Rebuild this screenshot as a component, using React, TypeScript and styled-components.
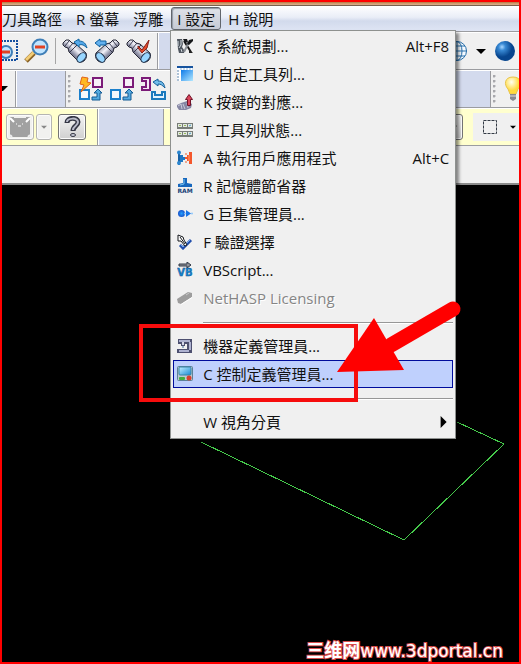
import React from "react";
import styled, { createGlobalStyle, css } from "styled-components";

const line = "#9b9ca0";
const face = "#f0f0f0";
const blueFill = "#d3daed";
const paleYellow = "#ffffce";

const GlobalStyle = createGlobalStyle`
  * { box-sizing: border-box; }
  body { margin: 0; background: #000; }
  button { font: inherit; color: inherit; }
`;

const Window = styled.div`
  position: relative;
  display: flex;
  flex-direction: column;
  min-height: 100vh;
  overflow: hidden;
  border: 2px solid #f00;
  background: #000;
  color: #111;
  font: 15px/20px "Open Sans", "Noto Sans CJK TC", sans-serif;
`;

const TitleEdge = styled.div`
  height: 4px;
  background: linear-gradient(#b5763f, #e0b088 60%, #4c3c34);
`;

const MenuBar = styled.nav`
  display: flex;
  align-items: flex-start;
  height: 26px;
  padding-top: 1px;
  border-bottom: 1px solid ${line};
  background: linear-gradient(#fff, #e9edf7 45%, #d2daec 60%, #dfe5f4);
`;

const MenuItem = styled.button<{ $open?: boolean }>`
  height: 23px;
  margin: 0;
  padding: 0 6px;
  border: 1px solid transparent;
  border-radius: 3px;
  background: none;
  line-height: 20px;
  white-space: nowrap;
  &:first-child { padding-left: 0; margin-left: -1px; }
  ${(p) =>
    p.$open &&
    css`
      && { padding: 0 5px; margin: 0 0 0 1px; }
      border-color: #62666d;
      background: linear-gradient(#dfe2e8, #c6cbd6);
      box-shadow: inset 1px 1px 1px #9299a6;
    `}
`;

const MenuAnchor = styled.div`
  position: relative;
  height: 23px;
`;

const Popup = styled.div`
  position: absolute;
  z-index: 2;
  top: 100%;
  left: 0;
  width: 286px;
  padding: 1px 2px 2px;
  border: 1px solid #8e918f;
  background: ${face};
  box-shadow: 3px 3px 3px rgba(0, 0, 0, 0.45);
`;

const PopupItem = styled.button<{ $active?: boolean }>`
  display: flex;
  align-items: center;
  width: 100%;
  height: 28px;
  padding: 0 3px;
  border: 1px solid ${(p) => (p.$active ? "#000c9c" : "transparent")};
  background: ${(p) => (p.$active ? "#bfd0fd" : "none")};
  line-height: 20px;
  text-align: left;
  &:disabled { color: #858585; text-shadow: 1px 1px #fff; }
`;

const IconCell = styled.span`
  display: flex;
  flex: 0 0 26px;
`;

const ItemText = styled.span`
  flex: 1;
  white-space: nowrap;
`;

const Shortcut = styled.span`
  white-space: nowrap;
`;

const Separator = styled.hr`
  height: 2px;
  margin: 10px 0 8px 30px;
  border: 0;
  border-top: 1px solid #979797;
  background: #fff;
`;

const ToolRow = styled.div<{ $yellow?: boolean }>`
  display: flex;
  height: 38px;
  border-top: 1px solid #fff;
  border-bottom: 1px solid ${line};
  background: ${(p) => (p.$yellow ? paleYellow : blueFill)};
`;

const Band = styled.div<{ $w: number; $gap?: number; $pad?: number; $yellow?: boolean }>`
  display: flex;
  flex: 0 0 ${(p) => p.$w}px;
  width: ${(p) => p.$w}px;
  align-items: center;
  gap: ${(p) => p.$gap ?? 0}px;
  padding-left: ${(p) => p.$pad ?? 0}px;
  overflow: hidden;
  border-right: 1px solid ${line};
  background: ${(p) => (p.$yellow ? paleYellow : face)};
  &:last-child { border-right: 0; }
`;

const Gap = styled.div<{ $w?: number }>`
  flex: ${(p) => (p.$w ? `0 0 ${p.$w}px` : "1")};
  border-right: 1px solid ${line};
  border-left: 1px solid #fff;
  background: ${blueFill};
`;

const Grip = styled.div`
  flex: 0 0 3px;
  height: 28px;
  margin-right: 2px;
  background: radial-gradient(circle at 1px 1px, #a8a8ac 1px, transparent 2px) 0 0 / 3px 5px;
`;

const Rule = styled.div`
  flex: 0 0 1px;
  height: 26px;
  background: #a5a5a5;
`;

const ToolButton = styled.button`
  display: flex;
  flex: none;
  align-items: center;
  justify-content: center;
  padding: 0;
  border: 0;
  background: none;
`;

const ButtonPair = styled.div`
  display: flex;
  gap: 2px;
`;

const BoxButton = styled.button<{ $w: number; $strong?: boolean }>`
  display: flex;
  flex: 0 0 ${(p) => p.$w}px;
  align-items: center;
  justify-content: center;
  height: 26px;
  padding: 0;
  border: 1px solid ${(p) => (p.$strong ? "#747474" : "#b5b5b2")};
  border-radius: 3px;
  background: ${(p) => (p.$strong ? "linear-gradient(#f4f4f4, #d0d0d0)" : "#f1f1ef")};
  box-shadow: inset 0 0 0 1px #fbfbfb;
`;

const SelectBand = styled.div`
  display: flex;
  flex: 1;
  align-items: center;
  gap: 13px;
  height: 28px;
  margin-left: 10px;
  padding-left: 10px;
  background: ${face};
`;

const Status = styled.div`
  height: 39px;
  border-bottom: 2px solid #8b8b8b;
  background: ${face};
`;

const Canvas = styled.main`
  flex: 1;
  background: #000;
`;

const Drawing = styled.svg`
  display: block;
`;

const Mark = styled.div`
  position: absolute;
  z-index: 3;
  top: 322px;
  left: 137px;
  width: 219px;
  height: 78px;
  border: 4px solid #f60c0c;
  pointer-events: none;
`;

const Arrow = styled.svg`
  position: absolute;
  z-index: 4;
  top: 296px;
  left: 333px;
  pointer-events: none;
`;

const Watermark = styled.div`
  position: absolute;
  right: 16px;
  bottom: 0;
  color: #fff;
  font: 700 18px/22px "Noto Sans CJK SC", sans-serif;
  white-space: nowrap;
  -webkit-text-stroke: 2px #d84b4b;
  paint-order: stroke fill;
`;

const Site = styled.span`
  font: 17px/22px "DejaVu Sans", sans-serif;
`;

const Svg16 = ({ children }: { children: React.ReactNode }) => (
  <svg width="16" height="16" viewBox="0 0 16 16" aria-hidden="true">{children}</svg>
);

const SystemIcon = () => (
  <Svg16>
    <path d="M0 1h5l1 5-1 3 2 3v3H2l-1-4z" fill="#4f565f" />
    <path d="M1 3v5M4 2v5l-2 3M4 11l1 3" stroke="#d3dadf" fill="none" />
    <path d="M7 3l7 11" stroke="#111" strokeWidth="2" />
    <path d="M12 4l-5 10" stroke="#8b8f94" strokeWidth="2" />
    <path d="M6 1h4l1 3-3 1zM16 1l-4 1-2 4 2 1 4-4z" fill="#15171a" />
    <path d="M12 11l4 4h-4z" fill="#222" />
  </Svg16>
);

const WindowIcon = () => (
  <Svg16>
    <defs><linearGradient id="sky" x2="1" y2="1"><stop stopColor="#0e7be9" /><stop offset="1" stopColor="#b3e8ff" /></linearGradient></defs>
    <path d="M0 0h16v15H0z" fill="#fff" />
    <path d="M4 4h12v11H4z" fill="url(#sky)" />
    <path d="M0 0h16v2H0z" fill="#16539e" />
    <path d="M1 4v11" stroke="#5e87ae" strokeDasharray="2 1" />
    <path d="M3 3h13" stroke="#8fb8e0" strokeDasharray="2 1" />
  </Svg16>
);

const KeyIcon = () => (
  <Svg16>
    <path d="M0 11l4-2 6-2 5 3-1 4-5 2H2l-2-3z" fill="#8587a4" />
    <path d="M1 12l3-2 1 5M6 10l2 5M10 9l1 5" stroke="#c9cada" fill="none" />
    <path d="M12 .5l3.5 5h-2v6h-3v-6h-2z" fill="#da4359" stroke="#701329" />
  </Svg16>
);

const GridIcon = () => (
  <Svg16>
    <path d="M0 1h16v6H0zM0 9h16v6H0z" fill="#777d78" />
    <path d="M1 2h4v3H1zM6 2h4v3H6zM11 2h4v3h-4zM1 10h4v3H1zM6 10h4v3H6zM11 10h4v3h-4z" fill="#e2e8e1" />
    <path d="M2 3.5h2M7 3.5h2M2 11.5h2M7 11.5h2" stroke="#94b85b" />
    <path d="M12 4l2-1M12 12l2-1" stroke="#439ac9" />
  </Svg16>
);

const LinkIcon = () => (
  <Svg16>
    <path d="M2 1v14" stroke="#1761a5" strokeWidth="2" />
    <circle cx="2" cy="2.500" r="2" fill="#2b86cf" />
    <circle cx="2" cy="13" r="2" fill="#2b86cf" />
    <path d="M3 5h3v2h2v3H6v2H3z" fill="#1f78c4" />
    <path d="M15 2v12h-3v-3h-2v-2H8V7h2V5h2V2z" fill="#f4572c" />
    <path d="M12 5v6" stroke="#ffa06c" />
    <circle cx="9" cy="4" r="1" fill="#f0906c" /><circle cx="9" cy="12" r="1" fill="#f0906c" />
  </Svg16>
);

const RamIcon = () => (
  <Svg16>
    <path d="M6 0h4v5l5 1v3H1V6l5-1z" fill="#1667bd" />
    <path d="M7 1v5l-4 1" stroke="#78c5f1" fill="none" />
    <text x="8" y="15" textAnchor="middle" fontSize="6" fontWeight="bold" fontFamily="DejaVu Sans" fill="#163f76">RAM</text>
  </Svg16>
);

const MacroIcon = () => (
  <Svg16>
    <defs><radialGradient id="dot"><stop stopColor="#269fff" /><stop offset="1" stopColor="#1653ca" /></radialGradient></defs>
    <circle cx="4.500" cy="7.500" r="3.500" fill="url(#dot)" />
    <path d="M9 4l5 3.500L9 11z" fill="#1773e6" />
    <circle cx="8" cy="7.500" r="1" fill="#91c8fa" /><circle cx="15" cy="7.500" r="1" fill="#91c8fa" />
  </Svg16>
);

const VerifyIcon = () => (
  <Svg16>
    <path d="M3 11l3 3 8-8" fill="none" stroke="#214eac" strokeWidth="3" />
    <path d="M4 11l2 2 7-7" fill="none" stroke="#72a8f0" />
    <path d="M1 1l5 2 1 3 3 5-2 1-4-5-3 0z" fill="#fff" stroke="#15181d" />
    <path d="M3 3l5 7" stroke="#15181d" />
  </Svg16>
);

const ScriptIcon = () => (
  <Svg16>
    <path d="M2 2h8V0l4 3-4 3V4H2z" fill="#929399" stroke="#313946" />
    <text x="8" y="14" textAnchor="middle" fontSize="10" fontWeight="bold" fontFamily="DejaVu Sans" fill="#1686d1" stroke="#104b88" strokeWidth=".4">VB</text>
  </Svg16>
);

const DongleIcon = () => (
  <Svg16>
    <path d="M0 9L11 2l4 1v4L4 14l-3-1z" fill="#9d9d9d" />
    <path d="M4 14.500l11-7" stroke="#fff" />
    <path d="M9 5l3-2" stroke="#c8c8c8" />
  </Svg16>
);

const MachineIcon = () => (
  <Svg16>
    <path d="M1 1h14v14H0v-4h10V6H8v2H4V6H1z" fill="#4d5070" />
    <path d="M2 2h11v2H2zM12 4h2v8h-2zM2 12h10v2H2z" fill="#aeb2d0" />
    <path d="M5 4h2v3H5z" fill="#d4d7e8" />
    <path d="M6 8v2" stroke="#3e6797" />
  </Svg16>
);

const ControlIcon = () => (
  <Svg16>
    <defs><linearGradient id="screen" x2="1" y2="1"><stop stopColor="#c5efff" /><stop offset="1" stopColor="#188bd4" /></linearGradient></defs>
    <rect x=".5" y=".5" width="15" height="14" rx="1" fill="#bdc9d0" stroke="#5c8197" />
    <rect x="2" y="1" width="12" height="8" rx="1" fill="url(#screen)" stroke="#3b83a6" />
    <rect x="2" y="11" width="6" height="3" rx="1" fill="#42ac3f" />
    <circle cx="12" cy="12" r="2.500" fill="#d93e2c" />
  </Svg16>
);

const Magnifier = ({ marquee }: { marquee?: boolean }) => (
  <svg width={marquee ? 16 : 25} height="26" viewBox={marquee ? "9 0 16 26" : "0 0 25 26"} aria-hidden="true">
    {marquee && <path d="M2 3h22v19H2" fill="none" stroke="#154f9f" strokeWidth="2" strokeDasharray="2 1" />}
    {!marquee && <path d="M2 23l8-8" stroke="#8a6225" strokeWidth="5" />}
    {!marquee && <path d="M2 22l8-8" stroke="#f3cd76" strokeWidth="3" />}
    <circle cx={marquee ? 13 : 16} cy={marquee ? 14 : 9} r={marquee ? 6 : 7.5} fill="#c0e4ff" stroke="#3f7fb8" strokeWidth="2" />
    <path d={marquee ? "M9 14h8" : "M11 9h10"} stroke="#e04224" strokeWidth="3" />
  </svg>
);

const Spyglass = ({ kind }: { kind: "undo" | "left" | "check" }) => (
  <svg width="26" height="26" viewBox="0 0 26 26" aria-hidden="true">
    <defs>
      <linearGradient id={`tube-${kind}`} x1="0.2" y1="0.8" x2="0.8" y2="0.2">
        <stop stopColor="#34364a" /><stop offset=".35" stopColor="#8d8fa5" /><stop offset=".6" stopColor="#f3f3fa" /><stop offset="1" stopColor="#707187" />
      </linearGradient>
    </defs>
    <g transform={kind === "left" ? "translate(26 0) scale(-1 1)" : undefined}>
      <path d="M1 5l3-3h3l3 3 4 1 10 9c2 5-2 10-7 9L7 14l-1-4-3-1-2-2z" fill={`url(#tube-${kind})`} stroke="#262837" />
      <path d="M3 8l4-5M6 11l5-6M8 14l7-7" stroke="#393b50" />
      <ellipse cx="19.500" cy="19.500" rx="3.500" ry="5.500" transform="rotate(42 19.500 19.500)" fill="#98d6ff" stroke="#20344f" />
    </g>
    {kind === "undo" && <path d="M12 4l5-3v2c5 0 7 3 8 7-3-3-5-4-8-3v2z" fill="#55a9ea" stroke="#13649f" />}
    {kind === "left" && <path d="M1 5l5-4v2h6v4H6v2z" fill="#63b1ef" stroke="#0e5e9d" />}
    {kind === "check" && <path d="M12 8l4 4 7-10-2 8-5 5-4-5z" fill="#e44b2a" stroke="#8a2118" />}
  </svg>
);

const TransformIcon = ({ kind }: { kind: "flash" | "move" | "rotate" }) => (
  <svg width="25" height="26" viewBox="0 0 25 26" aria-hidden="true">
    {kind !== "rotate" && <path d="M1 14h9v9H1z" fill="#f5f8fc" strokeWidth="2" stroke="#1c80cc" />}
    {kind !== "rotate" && <path d="M14 2h9v9h-9z" fill="#f7eff7" strokeWidth="2" stroke="#7b1b78" />}
    {kind !== "rotate" && <path d="M13 21h5v-4h-3l4-4 4 4h-2v7h-8z" fill="#55aae0" stroke="#125b94" />}
    {kind === "flash" && <path d="M3 1l6 1-1 4 4 1-10 9 3-7-4-1z" fill="#ffb822" stroke="#e16218" />}
    {kind === "rotate" && (
      <>
        <path d="M1 2h8v12H1v-3h4V5H1z" fill="#f4e8f4" stroke="#7b1b78" strokeWidth="2" />
        <path d="M12 6l5-3v2c5 0 6 3 7 7-3-3-4-4-7-4v2z" fill="#73bdeb" stroke="#145f9a" />
        <path d="M11 16h3v3h7v-3h3v7H11z" fill="#e2f2ff" stroke="#1b79bd" strokeWidth="2" />
      </>
    )}
  </svg>
);

const Triangle = ({ right, size = 10, color = "#000" }: { right?: boolean; size?: number; color?: string }) => (
  <svg width={size} height={size} viewBox="0 0 10 10" aria-hidden="true">
    <path d={right ? "M3 0l5 5-5 5z" : "M0 3h10L5 8z"} fill={color} />
  </svg>
);

const FaceIcon = () => (
  <svg width="24" height="22" viewBox="0 0 24 22" aria-hidden="true">
    <path d="M2 1h20v20H2z" fill="#a1a1a1" />
    <path d="M6 0h12v2H6z" fill="#f1f1ef" />
    <path d="M2 2l4 4M22 2l-4 4" stroke="#fff" strokeWidth="2" />
    <path d="M8 8h1M14 8h1M10 10h3" stroke="#fff" />
    <path d="M2 19l2 2M22 19l-2 2" stroke="#eee" strokeWidth="2" />
  </svg>
);

const HelpIcon = () => (
  <svg width="20" height="22" viewBox="0 0 20 22" aria-hidden="true">
    <path d="M5 7c0-6 11-6 11-1 0 4-5 4-5 9" fill="none" stroke="#333543" strokeWidth="5" />
    <path d="M5 6c0-4 11-5 11 0 0 4-5 4-5 8" fill="none" stroke="#b9bbca" strokeWidth="2" />
    <ellipse cx="11" cy="19" rx="2.500" ry="1.500" fill="#c9cbd7" stroke="#333543" />
  </svg>
);

const GlobeIcon = () => (
  <svg width="22" height="22" viewBox="0 0 22 22" aria-hidden="true">
    <g fill="none" stroke="#266eaa">
      <circle cx="11" cy="11" r="9.500" fill="#f5faff" />
      <ellipse cx="11" cy="11" rx="5" ry="9.500" />
      <path d="M1 11h20M11 1v20M3 6h16M3 16h16" />
    </g>
  </svg>
);

const BallIcon = () => (
  <svg width="22" height="22" viewBox="0 0 22 22" aria-hidden="true">
    <defs><radialGradient id="ball" cx=".35" cy=".3"><stop stopColor="#a9d7ff" /><stop offset=".35" stopColor="#3889d4" /><stop offset="1" stopColor="#07458e" /></radialGradient></defs>
    <circle cx="11" cy="11" r="10" fill="url(#ball)" />
  </svg>
);

const BulbIcon = () => (
  <svg width="18" height="26" viewBox="0 0 18 26" aria-hidden="true">
    <defs><radialGradient id="bulb" cx=".4" cy=".3"><stop stopColor="#fffff0" /><stop offset="1" stopColor="#ffda3e" /></radialGradient></defs>
    <path d="M9 1c-9 0-9 8-5 12l2 5h6l2-5c4-4 4-12-5-12z" fill="url(#bulb)" stroke="#e8c44d" />
    <path d="M6 18h6v5l-3 2-3-2z" fill="#888890" />
    <path d="M6 20h6" stroke="#ddd" />
  </svg>
);

const MarqueeIcon = () => (
  <svg width="14" height="14" viewBox="0 0 14 14" aria-hidden="true">
    <path d="M.5.5h13v13H.5z" fill="none" stroke="#333a45" strokeDasharray="3 1" />
  </svg>
);

type Entry = { text: string; Icon?: React.FC; keys?: string; disabled?: boolean; active?: boolean; submenu?: boolean };

const groups: Entry[][] = [
  [
    { text: "C 系統規劃...", Icon: SystemIcon, keys: "Alt+F8" },
    { text: "U 自定工具列...", Icon: WindowIcon },
    { text: "K 按鍵的對應...", Icon: KeyIcon },
    { text: "T 工具列狀態...", Icon: GridIcon },
    { text: "A 執行用戶應用程式", Icon: LinkIcon, keys: "Alt+C" },
    { text: "R 記憶體節省器", Icon: RamIcon },
    { text: "G 巨集管理員...", Icon: MacroIcon },
    { text: "F 驗證選擇", Icon: VerifyIcon },
    { text: "VBScript...", Icon: ScriptIcon },
    { text: "NetHASP Licensing", Icon: DongleIcon, disabled: true },
  ],
  [
    { text: "機器定義管理員...", Icon: MachineIcon },
    { text: "C 控制定義管理員...", Icon: ControlIcon, active: true },
  ],
  [{ text: "W 視角分頁", submenu: true }],
];

const SettingsMenu = () => (
  <Popup role="menu">
    {groups.map((entries, i) => (
      <React.Fragment key={i}>
        {i > 0 && <Separator />}
        {entries.map(({ text, Icon, keys, disabled, active, submenu }) => (
          <PopupItem key={text} role="menuitem" disabled={disabled} $active={active}>
            <IconCell>{Icon && <Icon />}</IconCell>
            <ItemText>{text}</ItemText>
            {keys && <Shortcut>{keys}</Shortcut>}
            {submenu && <Triangle right size={12} />}
          </PopupItem>
        ))}
      </React.Fragment>
    ))}
  </Popup>
);

export default function App() {
  return (
    <Window>
      <GlobalStyle />
      <TitleEdge />
      <MenuBar>
        <MenuItem>刀具路徑</MenuItem>
        <MenuItem>R 螢幕</MenuItem>
        <MenuItem>浮雕</MenuItem>
        <MenuAnchor>
          <MenuItem $open aria-expanded="true">I 設定</MenuItem>
          <SettingsMenu />
        </MenuAnchor>
        <MenuItem>H 說明</MenuItem>
      </MenuBar>

      <ToolRow>
        <Band $w={156} $gap={6}>
          <ToolButton aria-label="Zoom window"><Magnifier marquee /></ToolButton>
          <ToolButton aria-label="Zoom out"><Magnifier /></ToolButton>
          <Rule />
          <ToolButton aria-label="Previous view"><Spyglass kind="undo" /></ToolButton>
          <ToolButton aria-label="Back"><Spyglass kind="left" /></ToolButton>
          <ToolButton aria-label="Accept view"><Spyglass kind="check" /></ToolButton>
        </Band>
        <Gap />
        <Band $w={74} $gap={8} $pad={1}>
          <ToolButton aria-label="Wireframe"><GlobeIcon /></ToolButton>
          <ToolButton aria-label="Wireframe options"><Triangle /></ToolButton>
          <ToolButton aria-label="Shaded"><BallIcon /></ToolButton>
        </Band>
      </ToolRow>

      <ToolRow>
        <Band $w={14}>
          <ToolButton aria-label="More"><svg width="6" height="6"><path d="M0 0h6L1 5H0z" /></svg></ToolButton>
        </Band>
        <Gap $w={50} />
        <Band $w={110} $gap={6} $pad={2}>
          <Grip />
          <ToolButton aria-label="Dynamic transform"><TransformIcon kind="flash" /></ToolButton>
          <ToolButton aria-label="Translate"><TransformIcon kind="move" /></ToolButton>
          <ToolButton aria-label="Rotate"><TransformIcon kind="rotate" /></ToolButton>
        </Band>
        <Gap />
        <Band $w={28} $gap={6} $pad={2}>
          <Grip />
          <ToolButton aria-label="Hint"><BulbIcon /></ToolButton>
        </Band>
      </ToolRow>

      <ToolRow $yellow>
        <Band $w={96} $gap={6} $pad={4} $yellow>
          <ButtonPair>
            <BoxButton $w={28} aria-label="Face"><FaceIcon /></BoxButton>
            <BoxButton $w={16} aria-label="Face options"><Triangle size={6} color="#888" /></BoxButton>
          </ButtonPair>
          <BoxButton $w={28} $strong aria-label="Help"><HelpIcon /></BoxButton>
        </Band>
        <Gap $w={66} />
        <Band $w={280} $yellow />
        <Band $w={75} $yellow>
          <BoxButton $w={19} $strong aria-label="Selection"><Triangle size={6} /></BoxButton>
          <SelectBand>
            <ToolButton aria-label="Select area"><MarqueeIcon /></ToolButton>
            <ToolButton aria-label="Select options"><Triangle size={6} /></ToolButton>
          </SelectBand>
        </Band>
      </ToolRow>
      <Status />

      <Canvas>
        <Drawing width="517" height="400" viewBox="2 185 517 400" aria-hidden="true">
          <path d="M201 442L404 540 504 444 457 422" fill="none" stroke="#45c94b" shapeRendering="crispEdges" />
        </Drawing>
      </Canvas>

      <Mark />
      <Arrow width="130" height="80" viewBox="335 298 130 80" aria-hidden="true">
        <path d="M391 345L453 309" stroke="#f00" strokeWidth="15" strokeLinecap="round" />
        <path d="M337 372L374 318 404 370z" fill="#f00" />
      </Arrow>
      <Watermark>三维网<Site>www.3dportal.cn</Site></Watermark>
    </Window>
  );
}
